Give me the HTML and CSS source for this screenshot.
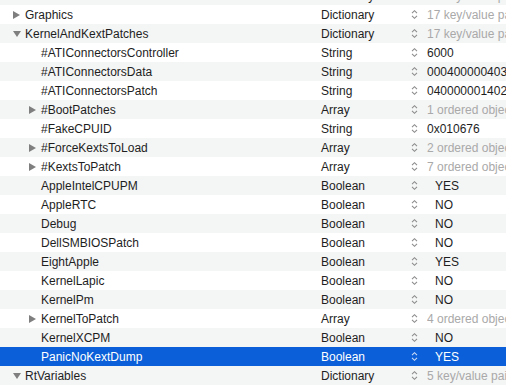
FILE: index.html
```html
<!DOCTYPE html>
<html lang="en">
<head>
    <meta charset="UTF-8">
    <title>config.plist</title>
    <link rel="stylesheet" href="styles.css">
</head>
<body>

    <!-- Editor de plist -->
    <div class="plist">
        <div class="row">
            <div class="key"><span class="tri right"></span>Devices</div>
            <div class="type">Dictionary</div>
            <div class="step"><svg width="7" height="11" viewBox="0 0 7 11"><path d="M1 4.2 L3.5 1.7 L6 4.2 M1 6.8 L3.5 9.3 L6 6.8"/></svg></div>
            <div class="val dim">17 key/value pairs</div>
        </div>
        <div class="row">
            <div class="key"><span class="tri right"></span>Graphics</div>
            <div class="type">Dictionary</div>
            <div class="step"><svg width="7" height="11" viewBox="0 0 7 11"><path d="M1 4.2 L3.5 1.7 L6 4.2 M1 6.8 L3.5 9.3 L6 6.8"/></svg></div>
            <div class="val dim">17 key/value pairs</div>
        </div>
        <div class="row">
            <div class="key"><span class="tri down"></span>KernelAndKextPatches</div>
            <div class="type">Dictionary</div>
            <div class="step"><svg width="7" height="11" viewBox="0 0 7 11"><path d="M1 4.2 L3.5 1.7 L6 4.2 M1 6.8 L3.5 9.3 L6 6.8"/></svg></div>
            <div class="val dim">17 key/value pairs</div>
        </div>
        <div class="row">
            <div class="key d2"><span class="tri"></span>#ATIConnectorsController</div>
            <div class="type">String</div>
            <div class="step"><svg width="7" height="11" viewBox="0 0 7 11"><path d="M1 4.2 L3.5 1.7 L6 4.2 M1 6.8 L3.5 9.3 L6 6.8"/></svg></div>
            <div class="val">6000</div>
        </div>
        <div class="row">
            <div class="key d2"><span class="tri"></span>#ATIConnectorsData</div>
            <div class="type">String</div>
            <div class="step"><svg width="7" height="11" viewBox="0 0 7 11"><path d="M1 4.2 L3.5 1.7 L6 4.2 M1 6.8 L3.5 9.3 L6 6.8"/></svg></div>
            <div class="val">000400000403000000010000210302</div>
        </div>
        <div class="row">
            <div class="key d2"><span class="tri"></span>#ATIConnectorsPatch</div>
            <div class="type">String</div>
            <div class="step"><svg width="7" height="11" viewBox="0 0 7 11"><path d="M1 4.2 L3.5 1.7 L6 4.2 M1 6.8 L3.5 9.3 L6 6.8"/></svg></div>
            <div class="val">040000001402000000010000210302</div>
        </div>
        <div class="row">
            <div class="key d2"><span class="tri right"></span>#BootPatches</div>
            <div class="type">Array</div>
            <div class="step"><svg width="7" height="11" viewBox="0 0 7 11"><path d="M1 4.2 L3.5 1.7 L6 4.2 M1 6.8 L3.5 9.3 L6 6.8"/></svg></div>
            <div class="val dim">1 ordered object</div>
        </div>
        <div class="row">
            <div class="key d2"><span class="tri"></span>#FakeCPUID</div>
            <div class="type">String</div>
            <div class="step"><svg width="7" height="11" viewBox="0 0 7 11"><path d="M1 4.2 L3.5 1.7 L6 4.2 M1 6.8 L3.5 9.3 L6 6.8"/></svg></div>
            <div class="val">0x010676</div>
        </div>
        <div class="row">
            <div class="key d2"><span class="tri right"></span>#ForceKextsToLoad</div>
            <div class="type">Array</div>
            <div class="step"><svg width="7" height="11" viewBox="0 0 7 11"><path d="M1 4.2 L3.5 1.7 L6 4.2 M1 6.8 L3.5 9.3 L6 6.8"/></svg></div>
            <div class="val dim">2 ordered objects</div>
        </div>
        <div class="row">
            <div class="key d2"><span class="tri right"></span>#KextsToPatch</div>
            <div class="type">Array</div>
            <div class="step"><svg width="7" height="11" viewBox="0 0 7 11"><path d="M1 4.2 L3.5 1.7 L6 4.2 M1 6.8 L3.5 9.3 L6 6.8"/></svg></div>
            <div class="val dim">7 ordered objects</div>
        </div>
        <div class="row">
            <div class="key d2"><span class="tri"></span>AppleIntelCPUPM</div>
            <div class="type">Boolean</div>
            <div class="step"><svg width="7" height="11" viewBox="0 0 7 11"><path d="M1 4.2 L3.5 1.7 L6 4.2 M1 6.8 L3.5 9.3 L6 6.8"/></svg></div>
            <div class="val bool">YES</div>
        </div>
        <div class="row">
            <div class="key d2"><span class="tri"></span>AppleRTC</div>
            <div class="type">Boolean</div>
            <div class="step"><svg width="7" height="11" viewBox="0 0 7 11"><path d="M1 4.2 L3.5 1.7 L6 4.2 M1 6.8 L3.5 9.3 L6 6.8"/></svg></div>
            <div class="val bool">NO</div>
        </div>
        <div class="row">
            <div class="key d2"><span class="tri"></span>Debug</div>
            <div class="type">Boolean</div>
            <div class="step"><svg width="7" height="11" viewBox="0 0 7 11"><path d="M1 4.2 L3.5 1.7 L6 4.2 M1 6.8 L3.5 9.3 L6 6.8"/></svg></div>
            <div class="val bool">NO</div>
        </div>
        <div class="row">
            <div class="key d2"><span class="tri"></span>DellSMBIOSPatch</div>
            <div class="type">Boolean</div>
            <div class="step"><svg width="7" height="11" viewBox="0 0 7 11"><path d="M1 4.2 L3.5 1.7 L6 4.2 M1 6.8 L3.5 9.3 L6 6.8"/></svg></div>
            <div class="val bool">NO</div>
        </div>
        <div class="row">
            <div class="key d2"><span class="tri"></span>EightApple</div>
            <div class="type">Boolean</div>
            <div class="step"><svg width="7" height="11" viewBox="0 0 7 11"><path d="M1 4.2 L3.5 1.7 L6 4.2 M1 6.8 L3.5 9.3 L6 6.8"/></svg></div>
            <div class="val bool">YES</div>
        </div>
        <div class="row">
            <div class="key d2"><span class="tri"></span>KernelLapic</div>
            <div class="type">Boolean</div>
            <div class="step"><svg width="7" height="11" viewBox="0 0 7 11"><path d="M1 4.2 L3.5 1.7 L6 4.2 M1 6.8 L3.5 9.3 L6 6.8"/></svg></div>
            <div class="val bool">NO</div>
        </div>
        <div class="row">
            <div class="key d2"><span class="tri"></span>KernelPm</div>
            <div class="type">Boolean</div>
            <div class="step"><svg width="7" height="11" viewBox="0 0 7 11"><path d="M1 4.2 L3.5 1.7 L6 4.2 M1 6.8 L3.5 9.3 L6 6.8"/></svg></div>
            <div class="val bool">NO</div>
        </div>
        <div class="row">
            <div class="key d2"><span class="tri right"></span>KernelToPatch</div>
            <div class="type">Array</div>
            <div class="step"><svg width="7" height="11" viewBox="0 0 7 11"><path d="M1 4.2 L3.5 1.7 L6 4.2 M1 6.8 L3.5 9.3 L6 6.8"/></svg></div>
            <div class="val dim">4 ordered objects</div>
        </div>
        <div class="row">
            <div class="key d2"><span class="tri"></span>KernelXCPM</div>
            <div class="type">Boolean</div>
            <div class="step"><svg width="7" height="11" viewBox="0 0 7 11"><path d="M1 4.2 L3.5 1.7 L6 4.2 M1 6.8 L3.5 9.3 L6 6.8"/></svg></div>
            <div class="val bool">NO</div>
        </div>
        <div class="row sel">
            <div class="key d2"><span class="tri"></span>PanicNoKextDump</div>
            <div class="type">Boolean</div>
            <div class="step"><svg width="7" height="11" viewBox="0 0 7 11"><path d="M1 4.2 L3.5 1.7 L6 4.2 M1 6.8 L3.5 9.3 L6 6.8"/></svg></div>
            <div class="val bool">YES</div>
        </div>
        <div class="row">
            <div class="key"><span class="tri down"></span>RtVariables</div>
            <div class="type">Dictionary</div>
            <div class="step"><svg width="7" height="11" viewBox="0 0 7 11"><path d="M1 4.2 L3.5 1.7 L6 4.2 M1 6.8 L3.5 9.3 L6 6.8"/></svg></div>
            <div class="val dim">5 key/value pairs</div>
        </div>
        <div class="row">
            <div class="key d2"><span class="tri"></span>BooterConfig</div>
            <div class="type">String</div>
            <div class="step"><svg width="7" height="11" viewBox="0 0 7 11"><path d="M1 4.2 L3.5 1.7 L6 4.2 M1 6.8 L3.5 9.3 L6 6.8"/></svg></div>
            <div class="val">0x28</div>
        </div>
    </div>

</body>
</html>
```

FILE: styles.css
```css
/* Geral */
body {
    margin: 0;
    padding: 0;
    background-color: #ffffff;
    font-family: 'Liberation Sans', Arial, sans-serif;
    font-size: 12px;
    color: #1e1e1e;
    height: 388px;
    overflow: hidden;
}

/* Lista do plist (a primeira linha fica cortada no topo) */
.plist {
    margin-top: -14px;
}

.row {
    display: flex;
    align-items: center;
    height: 19px;
    box-sizing: border-box;
    padding-top: 2px;
    line-height: 17px;
    white-space: nowrap;
    background-color: #ffffff;
}

.row:nth-child(odd) {
    background-color: #f4f5f5;
}

.row.sel {
    background-color: #0b5fd8;
    color: #ffffff;
}

/* Coluna Key */
.key {
    width: 321px;
    flex-shrink: 0;
    display: flex;
    align-items: center;
    padding-left: 13px;
    box-sizing: border-box;
}

.key.d2 {
    padding-left: 29px;
}

.tri {
    width: 12px;
    height: 10px;
    flex-shrink: 0;
    display: flex;
    align-items: center;
    margin-top: -2px;
}

.tri.right::before {
    content: '';
    border-left: 7px solid #7f7f7f;
    border-top: 4px solid transparent;
    border-bottom: 4px solid transparent;
}

.tri.down::before {
    content: '';
    margin-top: 1px;
    border-top: 6px solid #7f7f7f;
    border-left: 4px solid transparent;
    border-right: 4px solid transparent;
}

/* Coluna Type */
.type {
    width: 90px;
    flex-shrink: 0;
}

.step {
    width: 16px;
    flex-shrink: 0;
    display: flex;
    align-items: center;
    margin-top: -2px;
}

.step svg path {
    fill: none;
    stroke: #8c8c8c;
    stroke-width: 1.1;
}

.row.sel .step svg path {
    stroke: #c9dbf6;
}

/* Coluna Value */
.val {
    flex: 1;
    overflow: hidden;
}

.val.dim {
    color: #a9a9a9;
}

.val.bool {
    padding-left: 8px;
}
```
